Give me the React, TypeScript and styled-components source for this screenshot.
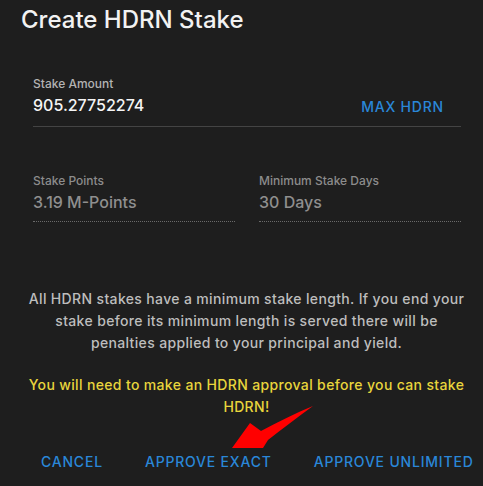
import React from "react";
import styled, { createGlobalStyle } from "styled-components";

const Global = createGlobalStyle`
  html, body { margin: 0; padding: 0; background: #1e1e1e; }
  body { font-family: Inter, "Open Sans", sans-serif; -webkit-font-smoothing: antialiased; }
`;

const Dialog = styled.div`
  position: relative;
  width: 483px;
  height: 486px;
  background: #1e1e1e;
  box-sizing: border-box;
  display: flex;
  flex-direction: column;
  overflow: hidden;
`;

const Title = styled.h2`
  margin: 0;
  padding: 4px 0 0 21px;
  font-size: 24px;
  line-height: 32px;
  font-weight: 500;
  color: #f2f2f2;
`;

const Content = styled.div`
  padding: 40px 22px 0 33px;
  display: flex;
  flex-direction: column;
`;

const Label = styled.div<{ $dim?: boolean }>`
  font-size: 12px;
  line-height: 16px;
  color: ${(p) => (p.$dim ? "#8c8c8c" : "#b3b3b3")};
  font-weight: 500;
`;

const AmountRow = styled.div`
  display: flex;
  align-items: center;
  justify-content: space-between;
  border-bottom: 1px solid #444;
  padding: 1px 17px 9px 0;
`;

const Value = styled.div<{ $disabled?: boolean }>`
  font-size: 16px;
  line-height: 24px;
  font-weight: 500;
  color: ${(p) => (p.$disabled ? "#8f8f8f" : "#f5f5f5")};
`;

const TextButton = styled.span`
  font-size: 14px;
  font-weight: 500;
  letter-spacing: 0.8px;
  color: #2a87d8;
  text-transform: uppercase;
  white-space: nowrap;
`;

const MaxButton = styled(TextButton)`
  margin-top: 3px;
`;

const InfoGrid = styled.div`
  display: grid;
  grid-template-columns: 1fr 1fr;
  column-gap: 24px;
  margin-top: 46px;
`;

const ReadField = styled.div`
  display: flex;
  flex-direction: column;
`;

const DottedValue = styled(Value)`
  border-bottom: 1px dotted #6a6a6a;
  padding: 1px 0 7px;
`;

const Notice = styled.p<{ $warn?: boolean }>`
  margin: 0;
  text-align: center;
  font-size: 14px;
  line-height: 22px;
  font-weight: 500;
  letter-spacing: 0.35px;
  color: ${(p) => (p.$warn ? "#e8d53c" : "#bdbdbd")};
`;

const Notes = styled.div`
  padding: 66px 14px 0 24px;
  display: flex;
  flex-direction: column;
  gap: 20px;
`;

const Actions = styled.div`
  margin-top: auto;
  display: flex;
  justify-content: flex-start;
  gap: 42px;
  padding: 0 0 16px 41px;
`;

const Arrow = styled.svg`
  position: absolute;
  left: 0;
  top: 0;
  pointer-events: none;
`;

export default function App() {
  return (
    <>
      <Global />
      <Dialog>
        <Title>Create HDRN Stake</Title>
        <Content>
          <Label>Stake Amount</Label>
          <AmountRow>
            <Value>905.27752274</Value>
            <MaxButton>Max HDRN</MaxButton>
          </AmountRow>
          <InfoGrid>
            <ReadField>
              <Label $dim>Stake Points</Label>
              <DottedValue $disabled>3.19 M-Points</DottedValue>
            </ReadField>
            <ReadField>
              <Label $dim>Minimum Stake Days</Label>
              <DottedValue $disabled>30 Days</DottedValue>
            </ReadField>
          </InfoGrid>
        </Content>
        <Notes>
          <Notice>
            All HDRN stakes have a minimum stake length. If you end your
            <br />
            stake before its minimum length is served there will be
            <br />
            penalties applied to your principal and yield.
          </Notice>
          <Notice $warn>
            You will need to make an HDRN approval before you can stake
            <br />
            HDRN!
          </Notice>
        </Notes>
        <Actions>
          <TextButton>Cancel</TextButton>
          <TextButton>Approve Exact</TextButton>
          <TextButton>Approve Unlimited</TextButton>
        </Actions>
        <Arrow width="483" height="486" viewBox="0 0 483 486">
          <path
            d="M313 406 C296 413 278 422 261 431 L250 423 L232 448 L263 448 L268 440 C283 428 298 417 313 406 Z"
            fill="#ff0000"
          />
        </Arrow>
      </Dialog>
    </>
  );
}
